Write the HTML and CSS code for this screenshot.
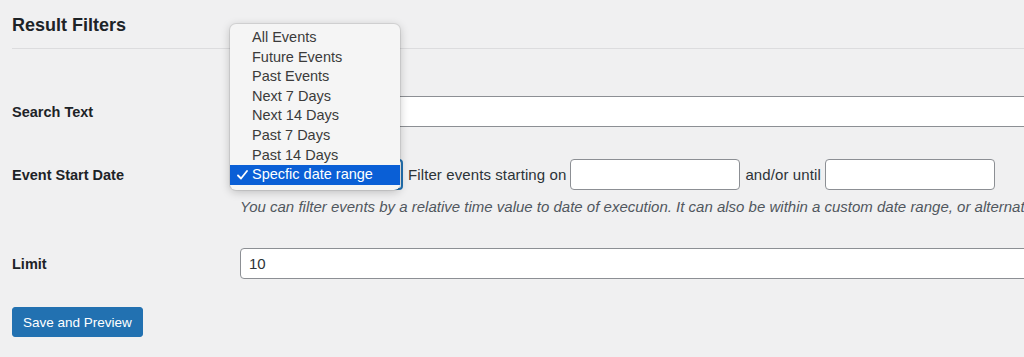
FILE: index.html
```html
<!doctype html>
<html>
<head>
<meta charset="utf-8">
<title>Result Filters</title>
<link rel="stylesheet" href="styles.css">
</head>
<body>
<div class="wrap">
	<h2 class="title">Result Filters</h2>

	<div class="row row-search">
		<div class="label">Search Text</div>
		<div class="field"><input class="text wide" type="text"></div>
	</div>

	<div class="row row-date">
		<div class="label">Event Start Date</div>
		<div class="field">
			<div class="line">
				<div class="select-wrap">
					<div class="select"></div>
					<ul class="popup">
						<li>All Events</li>
						<li>Future Events</li>
						<li>Past Events</li>
						<li>Next 7 Days</li>
						<li>Next 14 Days</li>
						<li>Past 7 Days</li>
						<li>Past 14 Days</li>
						<li class="on"><svg class="check" width="11" height="10" viewBox="0 0 11 10"><polyline points="1,5.5 4,8.5 10,1" fill="none" stroke="#fff" stroke-width="1.8" stroke-linecap="round" stroke-linejoin="round"/></svg>Specfic date range</li>
					</ul>
				</div>
				<span class="inl">Filter events starting on</span>
				<input class="text date" type="text">
				<span class="inl">and/or until</span>
				<input class="text date" type="text">
			</div>
			<p class="desc">You can filter events by a relative time value to date of execution. It can also be within a custom date range, or alternatively by specific dates.</p>
		</div>
	</div>

	<div class="row row-limit">
		<div class="label">Limit</div>
		<div class="field"><input class="text wide" type="text" value="10"></div>
	</div>

	<button class="btn">Save and Preview</button>
</div>
</body>
</html>
```

FILE: styles.css
```css
* {margin:0; padding:0; list-style:none; box-sizing:border-box;}
html, body {overflow:hidden;}
body {background:#f0f0f1; font-family:"Liberation Sans", Arial, sans-serif; color:#1d2327; font-size:14px;}
.wrap {padding:0 0 0 12px;}

.title {font-size:18px; font-weight:bold; line-height:23px; padding:14px 0 11px; border-bottom:1px solid #dcdcde;}

.row {display:grid; grid-template-columns:228px 1fr; align-items:start;}
.row-search {margin-top:47px;}
.row-date {margin-top:32px;}
.row-limit {margin-top:32px;}
.label {font-weight:bold; font-size:14.5px; line-height:29px; padding-top:2px; white-space:nowrap;}
.field {min-width:0;}

.text {height:31px; border:1px solid #8c8f94; border-radius:4px; background:#fff; font:15px "Liberation Sans", Arial, sans-serif; color:#2c3338; padding:0 8px; outline:none;}
.wide {width:820px;}
.date {width:170px;}

.line {display:flex; align-items:center; white-space:nowrap;}
.inl {margin:0 4px 0 5px; font-size:15px; letter-spacing:0.1px; color:#2c3338;}

.select-wrap {position:relative; width:163px; height:31px;}
.select {width:163px; height:31px; border:2px solid #2271b1; border-radius:4px; background:#fff;}

.popup {position:absolute; left:-10px; top:-135px; width:170px; padding:4px 0 5px; background:#f5f5f5; border-radius:6px; box-shadow:0 2px 10px rgba(0,0,0,.22), 0 0 0 1px rgba(0,0,0,.08); z-index:5;}
.popup li {height:19.6px; line-height:19.6px; padding-left:22px; font-size:14.5px; color:#3b3b3b; position:relative; white-space:nowrap;}
.popup li.on {background:#0a5fd6; color:#fff;}
.check {position:absolute; left:7px; top:5px;}

.desc {margin-top:7px; font-size:15px; font-style:italic; line-height:19px; color:#50575e; white-space:nowrap;}

.btn {margin-top:28px; height:30px; padding:0 10px; background:#2271b1; border:1px solid #2271b1; border-radius:3px; color:#fff; font:13.5px "Liberation Sans", Arial, sans-serif;}
```
